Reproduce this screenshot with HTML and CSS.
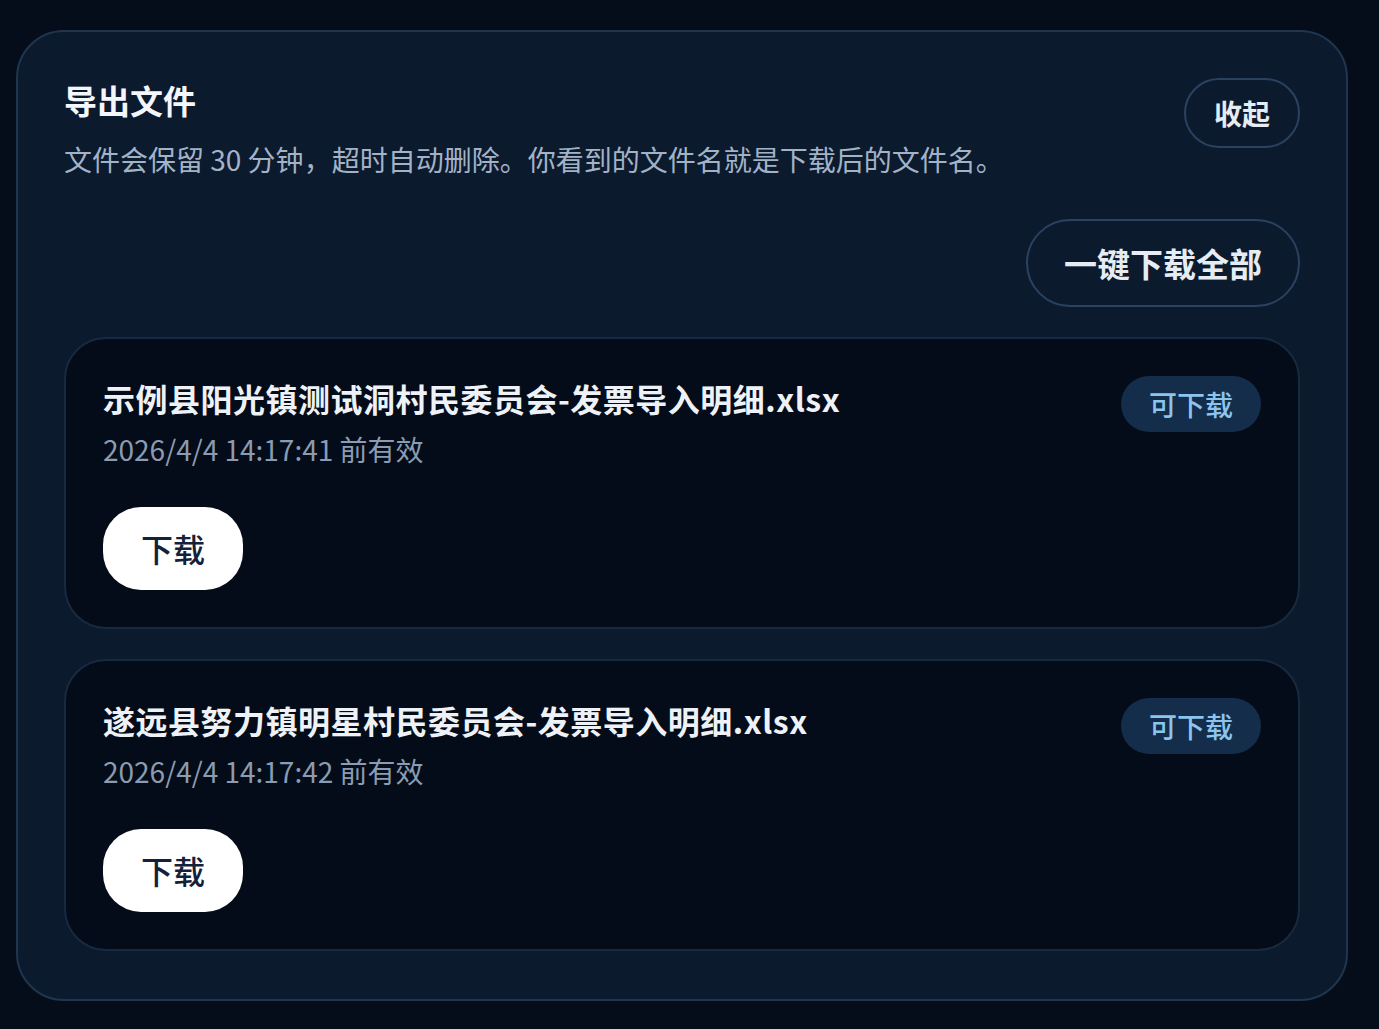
FILE: index.html
```html
<!DOCTYPE html>
<html lang="zh-CN">
<head>
<meta charset="utf-8">
<title>导出文件</title>
<link rel="stylesheet" href="styles.css">
</head>
<body>
<section class="panel">
  <header class="panel-head">
    <div class="head-text">
      <h2 class="panel-title">导出文件</h2>
      <p class="panel-sub">文件会保留 30 分钟，超时自动删除。你看到的文件名就是下载后的文件名。</p>
    </div>
    <button class="btn-outline btn-collapse" type="button">收起</button>
  </header>
  <div class="toolbar">
    <button class="btn-outline btn-all" type="button">一键下载全部</button>
  </div>
  <ul class="file-list">
    <li class="file-card">
      <div class="file-top">
        <div class="file-info">
          <div class="file-name">示例县阳光镇测试洞村民委员会-发票导入明细.xlsx</div>
          <div class="file-exp">2026/4/4 14:17:41 前有效</div>
        </div>
        <span class="badge">可下载</span>
      </div>
      <button class="btn-download" type="button">下载</button>
    </li>
    <li class="file-card">
      <div class="file-top">
        <div class="file-info">
          <div class="file-name">遂远县努力镇明星村民委员会-发票导入明细.xlsx</div>
          <div class="file-exp">2026/4/4 14:17:42 前有效</div>
        </div>
        <span class="badge">可下载</span>
      </div>
      <button class="btn-download" type="button">下载</button>
    </li>
  </ul>
</section>
</body>
</html>
```

FILE: styles.css
```css
* { box-sizing: border-box; }

html, body {
  margin: 0;
  background: #060d1a;
}

body {
  padding: 30px 31px 29px 16px;
  font-family: "Noto Sans CJK SC", "Noto Sans", sans-serif;
  color: #e8eef6;
}

.panel {
  background: #0c1a2e;
  border: 2px solid #20364f;
  border-radius: 48px;
  padding: 46px 46px 48px;
}

.panel-head {
  display: flex;
  justify-content: space-between;
  align-items: flex-start;
}

.panel-title {
  margin: 0;
  font-size: 33px;
  line-height: 44px;
  font-weight: 700;
  color: #f3f6fa;
}

.panel-sub {
  margin: 16px 0 0;
  font-size: 28px;
  line-height: 42px;
  color: #a3b3c7;
}

.btn-outline {
  font-family: inherit;
  background: transparent;
  border: 2px solid #2a4260;
  color: #e6ecf3;
  font-weight: 700;
  cursor: pointer;
}

.btn-collapse {
  height: 70px;
  padding: 0 28px;
  border-radius: 35px;
  font-size: 28px;
}

.toolbar {
  display: flex;
  justify-content: flex-end;
  margin-top: 39px;
}

.btn-all {
  height: 88px;
  padding: 0 36px;
  border-radius: 44px;
  font-size: 33px;
}

.file-list {
  list-style: none;
  margin: 30px 0 0;
  padding: 0;
  display: flex;
  flex-direction: column;
  gap: 30px;
}

.file-card {
  background: #040c19;
  border: 2px solid #182a40;
  border-radius: 42px;
  padding: 37px;
}

.file-top {
  display: flex;
  justify-content: space-between;
  align-items: flex-start;
}

.file-name {
  font-size: 32px;
  line-height: 44.8px;
  font-weight: 700;
  letter-spacing: 0.5px;
  color: #eef2f7;
}

.file-exp {
  margin-top: 7px;
  font-size: 28px;
  line-height: 42px;
  color: #8b9cb2;
}

.badge {
  display: inline-flex;
  align-items: center;
  height: 56px;
  padding: 0 28px;
  border-radius: 28px;
  background: #142d4a;
  color: #8cc4ee;
  font-size: 28px;
  font-weight: 500;
}

.btn-download {
  display: block;
  margin-top: 37px;
  height: 83px;
  padding: 0 38px;
  border: none;
  border-radius: 38px;
  background: #ffffff;
  color: #13213a;
  font-family: inherit;
  font-size: 32px;
  font-weight: 500;
  cursor: pointer;
}
```
